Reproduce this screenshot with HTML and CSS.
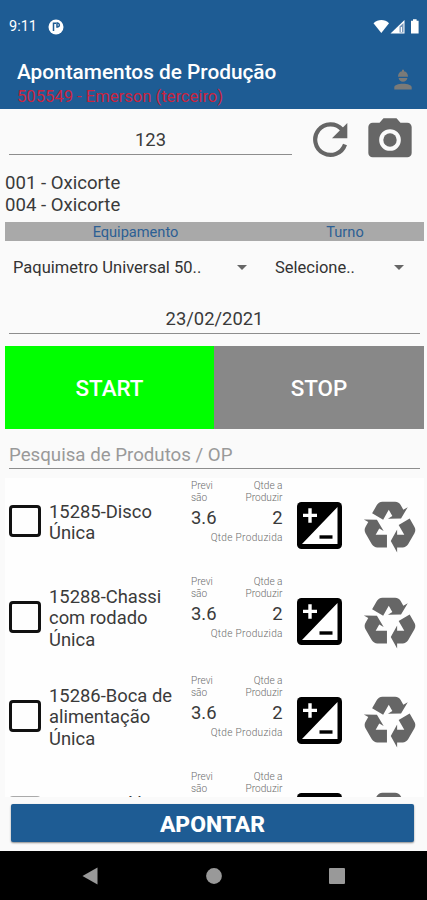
FILE: index.html
```
<!DOCTYPE html>
<html lang="pt-BR">
<head>
<meta charset="utf-8">
<meta name="viewport" content="width=device-width">
<title>Apontamentos de Produção</title>
<link rel="stylesheet" href="styles.css">
</head>
<body>
<svg class="defs" aria-hidden="true">
  <symbol id="exposure" viewBox="0 0 45 47">
    <rect width="45" height="47" rx="4.5"/>
    <path fill="#fff" d="M40.5 5V42H5zM11.3 6.3h3.4v5.4H20v3.4h-5.3v5.6h-3.4v-5.6H6v-3.4h5.3z"/>
    <path d="M22.5 33.3h13v3.4h-13z"/>
  </symbol>
  <symbol id="recycle" viewBox="0 0 24 24">
    <path d="M21.82 15.42L19.32 19.75C18.83 20.61 17.92 21.06 17 21H15V23L12.5 18.5L15 14V16H17.82L15.6 12.15L19.93 9.65L21.73 12.77C22.25 13.54 22.32 14.57 21.82 15.42M9.21 3.06H14.21C15.19 3.06 16.04 3.63 16.45 4.45L17.45 6.19L19.18 5.19L16.54 9.6L11.39 9.69L13.12 8.69L11.71 6.24L9.5 10.09L5.16 7.59L6.96 4.47C7.37 3.64 8.22 3.06 9.21 3.06M5.05 19.76L2.55 15.43C2.06 14.58 2.13 13.56 2.64 12.79L3.64 11.06L1.91 10.06L7.05 10.14L9.7 14.56L7.97 13.56L6.56 16H11V21H7.4C6.47 21.07 5.55 20.61 5.05 19.76Z"/>
  </symbol>
</svg>
<header class="top">
  <div class="status">
    <span class="clock">9:11</span>
    <svg class="app-badge" viewBox="0 0 16 16"><circle cx="8" cy="8" r="7.5" fill="#fff"/><path d="M5.500 12V4.300H8M9 4.100h1a2 2 0 0 1 0 3.800H9z" fill="none" stroke="#1e5c94" stroke-width="1.5"/></svg>
    <svg class="signals" viewBox="0 0 48 16">
      <path fill="#fff" d="M.5 4.2C5-.2 12-.2 16 4.2L8.3 14z"/>
      <path fill="#fff" d="M17.5 14.5L31.5 1v13.500z"/>
      <path fill="#7797bb" d="M26.500 7.500L30.500 4v9.500h-4z"/><path fill="#fff" d="M27.800 8h1.200v5h-1.200z"/>
      <path fill="#fff" d="M38 1.800h2V.3h3.600v1.500h2v12.700H38z"/>
    </svg>
  </div>
  <div class="appbar">
    <div class="titles">
      <h1>Apontamentos de Produção</h1>
      <p>505549 - Emerson (terceiro)</p>
    </div>
    <svg class="worker" viewBox="0 0 18 21"><path fill="#7a7a78" d="M4 7.800C4 4.500 5.500 2.700 8 2.200V.8h2v1.400c2.500.5 4 2.300 4 5.600zM4.600 9h8.800c-.5 2.500-2.200 3.700-4.400 3.700S5.100 11.500 4.600 9zM.3 20.500v-2.200c0-2.200 4-3.500 8.700-3.500s8.700 1.300 8.700 3.500v2.200z"/></svg>
  </div>
</header>
<main>
  <div class="scan">
    <div class="field code">123</div>
    <svg class="refresh" viewBox="0 0 36 36"><path d="M33 22.500A15.300 15.300 0 1 1 30 7.500" fill="none" stroke="#666" stroke-width="4.200"/><path fill="#666" d="M35.300 1v15.300H20z"/></svg>
    <svg class="camera" viewBox="0 0 24 24"><path fill="#666" fill-rule="evenodd" d="M9 2L7.170 4H4c-1.100 0-2 .9-2 2v12c0 1.100.9 2 2 2h16c1.100 0 2-.9 2-2V6c0-1.100-.9-2-2-2h-3.170L15 2zm3 15a5 5 0 1 1 0-10 5 5 0 0 1 0 10z"/><circle cx="12" cy="12" r="3.100" fill="#666"/></svg>
  </div>
  <div class="ops">001 - Oxicorte<br>004 - Oxicorte</div>
  <div class="heads"><span>Equipamento</span><span>Turno</span></div>
  <div class="selects">
    <div class="select equipment">Paquimetro Universal 50..<i></i></div>
    <div class="select shift">Selecione..<i></i></div>
  </div>
  <div class="field date">23/02/2021</div>
  <div class="actions"><button class="start">START</button><button class="stop">STOP</button></div>
  <div class="field search">Pesquisa de Produtos / OP</div>
  <section class="list">
    <article class="row">
      <span class="check"></span>
      <div class="name">15285-Disco<br>Única</div>
      <div class="qty"><small>Previ<br>são</small><small>Qtde a<br>Produzir</small><b>3.6</b><b>2</b><small class="made">Qtde Produzida</small></div>
      <svg class="exposure"><use href="#exposure"/></svg>
      <svg class="recycle"><use href="#recycle"/></svg>
    </article>
    <article class="row tall">
      <span class="check"></span>
      <div class="name">15288-Chassi<br>com rodado<br>Única</div>
      <div class="qty"><small>Previ<br>são</small><small>Qtde a<br>Produzir</small><b>3.6</b><b>2</b><small class="made">Qtde Produzida</small></div>
      <svg class="exposure"><use href="#exposure"/></svg>
      <svg class="recycle"><use href="#recycle"/></svg>
    </article>
    <article class="row">
      <span class="check"></span>
      <div class="name">15286-Boca de<br>alimentação<br>Única</div>
      <div class="qty"><small>Previ<br>são</small><small>Qtde a<br>Produzir</small><b>3.6</b><b>2</b><small class="made">Qtde Produzida</small></div>
      <svg class="exposure"><use href="#exposure"/></svg>
      <svg class="recycle"><use href="#recycle"/></svg>
    </article>
    <article class="row partial">
      <span class="check"></span>
      <div class="name">15287-Saída</div>
      <div class="qty"><small>Previ<br>são</small><small>Qtde a<br>Produzir</small></div>
      <svg class="exposure"><use href="#exposure"/></svg>
      <svg class="recycle"><use href="#recycle"/></svg>
    </article>
  </section>
  <button class="submit">APONTAR</button>
</main>
<nav class="navbar">
  <svg viewBox="0 0 16 18"><path d="M15.500.5v17L.5 9z"/></svg>
  <svg viewBox="0 0 16 18"><circle cx="8" cy="9" r="7.900"/></svg>
  <svg viewBox="0 0 16 18"><rect y="1" width="16" height="16" rx="1"/></svg>
</nav>
</body>
</html>
```
FILE: styles.css
```
* { box-sizing: border-box; }
body {
  margin: 0;
  width: 427px;
  height: 900px;
  overflow: hidden;
  display: flex;
  flex-direction: column;
  background: #fafafa;
  color: #3a3a3a;
  font-family: Roboto, sans-serif;
  font-size: 18.4px;
}
button { border: 0; padding: 0; font-family: inherit; color: #fff; }
svg { display: block; flex: none; }
.defs { position: absolute; width: 0; height: 0; }

.top { height: 109px; flex: none; background: #1e5c94; color: #fff; }
.status { display: flex; align-items: center; height: 53px; padding: 0 6px 0 9px; }
.clock { width: 39px; font-size: 14.500px; }
.app-badge { width: 16px; height: 16px; }
.signals { width: 48px; height: 16px; margin-left: auto; margin-right: 0; }
.appbar { display: flex; justify-content: space-between; padding: 6px 15px 0 17px; }
h1 { margin: 0; font-size: 20.800px; line-height: 26px; font-weight: 500; }
.titles p { margin: 0; font-size: 16.600px; line-height: 24px; color: #c9243f; }
.worker { width: 18px; height: 21px; margin-top: 10px; }

main { flex: none; height: 742px; display: flex; flex-direction: column; }
.field { border-bottom: 1.500px solid #8d8d8d; margin: 0 7px 0 9px; text-align: center; flex: none; }
.scan { display: flex; height: 62px; }
.code { width: 283px; height: 46px; margin-right: 0; line-height: 62px; }
.refresh { width: 36px; height: 36px; margin: 13px 0 0 20px; }
.camera { width: 52px; height: 52px; margin: 5px 0 0 16px; }
.ops { height: 51px; padding: 2px 5px 0; line-height: 21.500px; font-size: 18.600px; }
.heads {
  display: grid;
  grid-template-columns: 261px 158px;
  margin: 0 3px 0 5px;
  height: 19px;
  line-height: 21px;
  background: #a9a9a9;
  color: #2c5f94;
  font-size: 14.600px;
  text-align: center;
}
.selects { display: flex; height: 51px; margin: 0 20px 0 9px; font-size: 16.500px; color: #333; }
.select { display: flex; align-items: center; justify-content: space-between; padding: 1px 3px 0 4px; }
.equipment { width: 241px; }
.shift { width: 157px; padding-left: 25px; }
.select i { border: 5px solid transparent; border-top-color: #666; border-bottom: 0; }
.date { height: 42px; padding-top: 15px; line-height: 24px; }
.actions { display: grid; grid-template-columns: 209px 210px; margin: 12px 0 0 5px; height: 83px; }
.actions button { font-size: 22.400px; font-weight: 500; padding-top: 1px; }
.start { background: #0f0; }
.stop { background: #888; }
.search { height: 40px; line-height: 52px; text-align: left; color: #999; font-size: 18.700px; }
.list { margin: 9px 3px 0 5px; height: 319px; overflow: hidden; background: #fefefe; }
.row {
  display: grid;
  grid-template-columns: 32px 142px 93px 24.500px 45px 17px 62px;
  height: 96px;
}
.row.tall { height: 99px; }
.check { width: 32px; height: 32px; margin: 27px 0 0 4px; border: 3px solid #111; border-radius: 4px; }
.name { height: 88px; padding-left: 12px; display: flex; align-items: center; line-height: 21.500px; white-space: nowrap; }
.qty {
  display: grid;
  grid-template-columns: 30px 1fr;
  grid-template-rows: 23px 24px 14px;
  padding-top: 2px;
  margin-left: 12px;
  width: 91.500px;
  align-content: start;
}
.qty small { font-size: 10.100px; line-height: 12px; font-weight: 300; color: #6c6c6c; white-space: nowrap; }
.qty b { font-size: 18.400px; line-height: 29px; font-weight: 400; }
.qty > :nth-child(even) { text-align: right; }
.qty .made { grid-column: 1 / 3; text-align: right; line-height: 21px; letter-spacing: .3px; margin-right: -.3px; }
.exposure { grid-column: 5; width: 45px; height: 47px; margin-top: 23.500px; }
.recycle { grid-column: 7; width: 61px; height: 61px; margin-top: 16px; fill: #666; }
.partial { height: 28px; }
.partial .check { margin-top: 26.500px; border-color: #aaa; }
.partial .name { height: 28px; align-items: flex-start; padding-top: 24px; }
.submit {
  margin: 7px 13px 0 11px;
  height: 38px;
  flex: none;
  background: #1e5c94;
  border-radius: 2px;
  box-shadow: 0 1px 2px rgba(0, 0, 0, .45);
  font-size: 22.900px;
  font-weight: 800;
  padding-top: 2px;
}
.navbar { flex: 1; display: flex; justify-content: space-between; padding: 16px 82px 0 82px; background: #000; fill: #999; }
.navbar svg { width: 16px; height: 18px; }
```
